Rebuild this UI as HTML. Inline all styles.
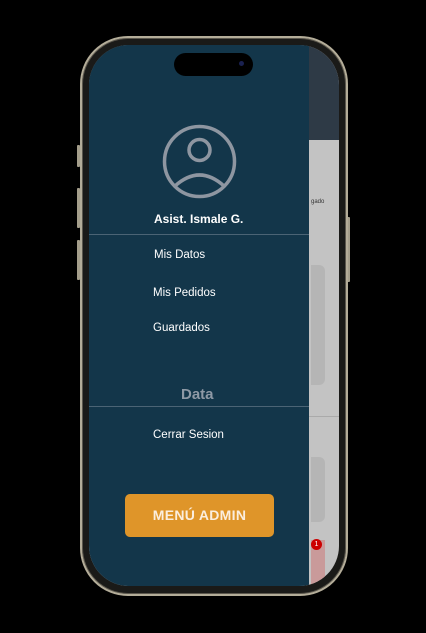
<!DOCTYPE html>
<html><head><meta charset="utf-8"><style>
*{margin:0;padding:0;box-sizing:border-box}
body{width:426px;height:633px;background:#000;position:relative;overflow:hidden;font-family:"Liberation Sans",sans-serif}
.frame{position:absolute;left:80px;top:36px;width:268px;height:560px;border-radius:48px;background:#1a1a18;border:2px solid #b4ad99;box-shadow:inset 0 0 0 1px #5b574d}
.btn{position:absolute;background:#a49e8b;width:3px;border-radius:1px}
.screen{position:absolute;left:89px;top:45px;width:250px;height:541px;border-radius:40px;overflow:hidden;background:#c3c3c3}
.hdr{position:absolute;left:0;top:0;width:250px;height:95px;background:#2e3a46}
.drawer{position:absolute;left:0;top:0;width:220px;height:541px;background:#13364a}
.island{position:absolute;left:85px;top:8px;width:79px;height:23px;border-radius:12px;background:#000}
.t{position:absolute;color:#fff;font-size:11.5px}
.line{position:absolute;left:0;width:220px;height:1px;background:#4b6475}
.admin{position:absolute;left:36px;top:449px;width:149px;height:43px;background:#df9529;border-radius:5px;color:#fbeede;font-weight:bold;font-size:14px;text-align:center;line-height:43px;letter-spacing:.3px}
</style></head><body>
<div class="btn" style="left:77px;top:145px;height:22px"></div>
<div class="btn" style="left:77px;top:188px;height:40px"></div>
<div class="btn" style="left:77px;top:240px;height:40px"></div>
<div class="btn" style="left:347px;top:217px;height:65px"></div>
<div class="frame"></div>
<div class="screen">
 <div class="hdr"></div>
 <div style="position:absolute;left:222px;top:220px;width:14px;height:120px;background:#b5b5b5;border-radius:0 6px 6px 0"></div>
 <div style="position:absolute;left:220px;top:371px;width:30px;height:1px;background:#aaa"></div>
 <div style="position:absolute;left:222px;top:412px;width:14px;height:65px;background:#b5b5b5;border-radius:0 6px 6px 0"></div>
 <div style="position:absolute;left:222px;top:495px;width:14px;height:46px;background:#c99a9a"></div>
 <div style="position:absolute;left:222px;top:494px;width:11px;height:11px;border-radius:50%;background:#c00;color:#fff;font-size:7px;text-align:center;line-height:11px">1</div>
 <div style="position:absolute;left:222px;top:154px;font-size:6px;color:#333">gado</div>
 <div class="drawer">
  <svg style="position:absolute;left:73px;top:79px" width="75" height="75" viewBox="0 0 75 75" fill="none" stroke="#8e96a1" stroke-width="3.5">
   <circle cx="37.5" cy="37.5" r="35"/><circle cx="37.5" cy="26" r="10.5"/><path d="M13 62 Q37.5 40 62 62"/>
  </svg>
  <div class="t" style="left:65px;top:167px;font-weight:bold;font-size:12px">Asist. Ismale G.</div>
  <div class="line" style="top:189px"></div>
  <div class="t" style="left:65px;top:204px">Mis Datos</div>
  <div class="t" style="left:64px;top:242px">Mis Pedidos</div>
  <div class="t" style="left:64px;top:277px">Guardados</div>
  <div class="t" style="left:92px;top:341px;color:#8e99a5;font-weight:bold;font-size:15px">Data</div>
  <div class="line" style="top:361px"></div>
  <div class="t" style="left:64px;top:384px">Cerrar Sesion</div>
  <div class="admin">MENÚ ADMIN</div>
 </div>
 <div class="island"></div>
 <div style="position:absolute;left:150px;top:16px;width:5px;height:5px;border-radius:50%;background:#1a2150"></div>
</div>
</body></html>
